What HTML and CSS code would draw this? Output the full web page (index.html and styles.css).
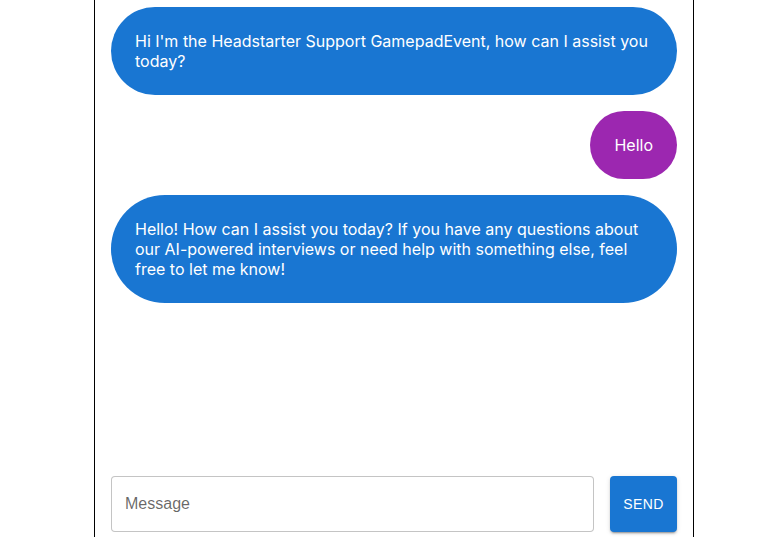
FILE: index.html
```html
<!DOCTYPE html>
<html lang="en">
<head>
<meta charset="utf-8">
<title>Headstarter Support</title>
<link rel="stylesheet" href="styles.css">
</head>
<body>
<div class="page">
  <div class="chat">
    <div class="messages">
      <div class="row row-assistant">
        <div class="bubble bubble-assistant">Hi I'm the Headstarter Support GamepadEvent, how can I assist you today?</div>
      </div>
      <div class="row row-user">
        <div class="bubble bubble-user">Hello</div>
      </div>
      <div class="row row-assistant">
        <div class="bubble bubble-assistant">Hello! How can I assist you today? If you have any questions about our AI-powered interviews or need help with something else, feel free to let me know!</div>
      </div>
    </div>
    <div class="composer">
      <div class="field">
        <input class="field-input" type="text" placeholder="Message">
      </div>
      <button class="send">Send</button>
    </div>
  </div>
</div>
</body>
</html>
```

FILE: styles.css
```css
html, body {
  margin: 0;
  padding: 0;
  background: #ffffff;
}

.page {
  height: 100vh;
  overflow: hidden;
  display: flex;
  flex-direction: column;
  justify-content: center;
  padding-left: 94px;
  box-sizing: border-box;
}

.chat {
  width: 600px;
  height: 561px;
  flex-shrink: 0;
  box-sizing: border-box;
  border: 1px solid #000000;
  padding: 18px 16px 16px;
  display: flex;
  flex-direction: column;
  gap: 24px;
}

.messages {
  flex: 1;
  display: flex;
  flex-direction: column;
  gap: 16px;
  overflow: hidden;
}

.row {
  display: flex;
}

.row-assistant {
  justify-content: flex-start;
}

.row-user {
  justify-content: flex-end;
}

.bubble {
  color: #ffffff;
  font-family: Inter, "Liberation Sans", sans-serif;
  font-size: 16px;
  line-height: 20px;
  padding: 24px;
  border-radius: 64px;
}

.bubble-assistant {
  background: #1976d2;
}

.bubble-user {
  background: #9c27b0;
}

.composer {
  display: flex;
  gap: 16px;
  height: 56px;
}

.field {
  flex: 1;
  display: flex;
}

.field-input {
  flex: 1;
  min-width: 0;
  box-sizing: border-box;
  height: 56px;
  margin: 0;
  border: 1px solid rgba(0, 0, 0, 0.23);
  border-radius: 4px;
  padding: 16.5px 13px;
  font-family: "Liberation Sans", Arial, sans-serif;
  font-size: 16px;
  color: rgba(0, 0, 0, 0.87);
  background: #ffffff;
  outline: none;
}

.field-input::placeholder {
  color: rgba(0, 0, 0, 0.6);
  opacity: 1;
}

.send {
  width: 67px;
  height: 56px;
  flex-shrink: 0;
  margin: 0;
  border: none;
  border-radius: 4px;
  background: #1976d2;
  color: #ffffff;
  font-family: "Liberation Sans", Arial, sans-serif;
  font-size: 14px;
  font-weight: 500;
  letter-spacing: 0.02857em;
  text-transform: uppercase;
  padding: 6px 0;
  white-space: nowrap;
  box-shadow: 0px 3px 1px -2px rgba(0, 0, 0, 0.2), 0px 2px 2px 0px rgba(0, 0, 0, 0.14), 0px 1px 5px 0px rgba(0, 0, 0, 0.12);
}
```
